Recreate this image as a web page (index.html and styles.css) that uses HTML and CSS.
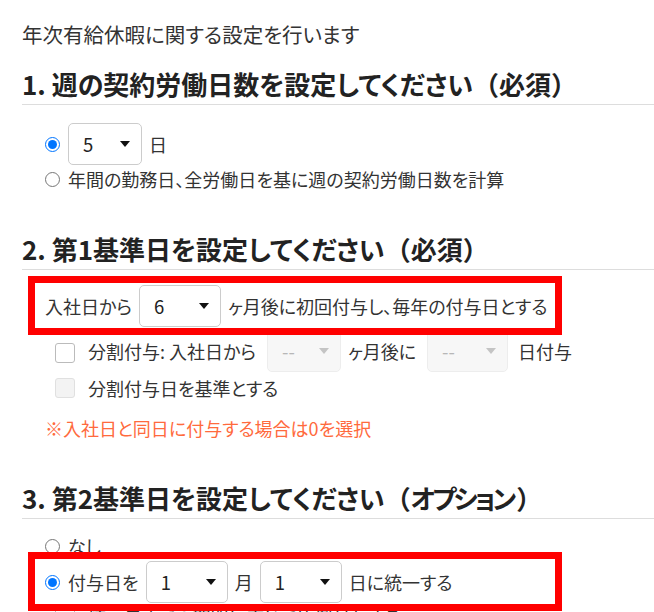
FILE: index.html
```html
<!DOCTYPE html>
<html lang="ja">
<head>
<meta charset="utf-8">
<title>年次有給休暇設定</title>
<link rel="stylesheet" href="styles.css">
</head>
<body>
<main class="page">
  <p class="intro">年次有給休暇に関する設定を行います</p>

  <section class="section">
    <h2 class="section-title">1. 週の契約労働日数を設定してください<span class="paren">（</span>必須<span class="paren">）</span></h2>
    <div class="options first-options">
      <label class="row">
        <input class="radio" type="radio" name="week" checked>
        <span class="select w74"><select><option>5</option></select></span>
        <span>日</span>
      </label>
      <label class="row line">
        <input class="radio" type="radio" name="week">
        <span>年間の勤務日、全労働日を基に週の契約労働日数を計算</span>
      </label>
    </div>
  </section>

  <section class="section">
    <h2 class="section-title">2. 第1基準日を設定してください<span class="paren">（</span>必須<span class="paren">）</span></h2>
    <div class="options second-options">
      <div class="row marked">
        <span>入社日から</span>
        <span class="select w82"><select><option>6</option></select></span>
        <span>ヶ月後に初回付与し、毎年の付与日とする</span>
        <span class="highlight"></span>
      </div>
      <label class="row check-row split">
        <input class="check" type="checkbox">
        <span class="check-label">分割付与: 入社日から</span>
        <span class="select w74 disabled"><select disabled><option>--</option></select></span>
        <span>ヶ月後に</span>
        <span class="select w81 disabled"><select disabled><option>--</option></select></span>
        <span class="tail">日付与</span>
      </label>
      <label class="row check-row line base">
        <input class="check" type="checkbox" disabled>
        <span class="check-label">分割付与日を基準とする</span>
      </label>
      <p class="note">※入社日と同日に付与する場合は0を選択</p>
    </div>
  </section>

  <section class="section">
    <h2 class="section-title">3. 第2基準日を設定してください<span class="paren">（</span><span class="kata">オプション</span><span class="paren">）</span></h2>
    <div class="options third-options">
      <label class="row line">
        <input class="radio" type="radio" name="second">
        <span>なし</span>
      </label>
      <div class="row marked unify">
        <input class="radio" type="radio" name="second" checked>
        <span>付与日を</span>
        <span class="select w82"><select><option>1</option></select></span>
        <span>月</span>
        <span class="select w82"><select><option>1</option></select></span>
        <span>日に統一する</span>
        <span class="highlight"></span>
      </div>
      <label class="row check-row line after">
        <input class="check" type="checkbox">
        <span class="check-label">統一日までの期間に応じて比例付与する</span>
      </label>
    </div>
  </section>
</main>
</body>
</html>
```

FILE: styles.css
```css
* {
  box-sizing: border-box;
}

html {
  overflow: hidden;
}

body {
  margin: 0;
  background: #ffffff;
  color: #333333;
  font-family: "Noto Sans CJK JP", "Noto Sans", sans-serif;
  font-size: 18px;
  line-height: 28px;
  font-feature-settings: "palt" 1;
}

.page {
  padding: 20px 0 0 22px;
}

.intro {
  margin: 0;
  font-size: 20.5px;
  line-height: 28px;
}

.section-title {
  margin: 42px 0 0;
  padding-bottom: 7px;
  border-bottom: 1px solid #dddddd;
  color: #222222;
  font-size: 26px;
  line-height: 27px;
  font-weight: 700;
}

.paren {
  font-feature-settings: normal;
}

.kata {
  letter-spacing: -3px;
  margin-right: 3px;
}

.section:first-of-type .section-title {
  margin-top: 22px;
}

.options {
  padding-left: 23px;
}

.first-options {
  margin-top: 18px;
}

.second-options {
  margin-top: 15px;
}

.third-options {
  margin-top: 13px;
}

.row {
  display: flex;
  align-items: center;
  gap: 7px;
  height: 42px;
  white-space: nowrap;
}

.row.line {
  height: 28px;
}

.marked {
  position: relative;
}

.highlight {
  position: absolute;
  z-index: 2;
  left: -17px;
  top: -9px;
  width: 534px;
  height: 59px;
  border: 7px solid #ff0000;
  pointer-events: none;
}

.radio {
  width: 15px;
  height: 15px;
  margin: 0 1px 0 0;
  accent-color: #0075ff;
}

.select {
  position: relative;
  display: inline-block;
  flex: none;
  height: 42px;
}

.select select {
  appearance: none;
  -webkit-appearance: none;
  width: 100%;
  height: 42px;
  margin: 0;
  padding: 0 0 0 14px;
  border: 1px solid #cccccc;
  border-radius: 5px;
  background: #ffffff;
  color: #222222;
  font-family: inherit;
  font-size: 18.5px;
}

.select::after {
  content: "";
  position: absolute;
  right: 12px;
  top: 50%;
  margin-top: -3px;
  border-left: 5px solid transparent;
  border-right: 5px solid transparent;
  border-top: 6px solid #111111;
  pointer-events: none;
}

.select.disabled select {
  background: #f5f5f5;
  border-color: #e6e6e6;
  color: #999999;
}

.select.disabled::after {
  border-top-color: #c4c4c4;
}

.w74 {
  width: 74px;
}

.w81 {
  width: 81px;
}

.w82 {
  width: 82px;
}

.second-options .marked {
  margin-bottom: 3px;
}

.check-row {
  padding-left: 10px;
}

.check {
  appearance: none;
  -webkit-appearance: none;
  flex: none;
  width: 20px;
  height: 20px;
  margin: 0 6px 0 0;
  border: 1px solid #bbbbbb;
  border-radius: 3px;
  background: #ffffff;
}

.check:disabled {
  background: #f3f3f3;
  border-color: #e0e0e0;
}

.split .check {
  margin-top: 4px;
}

.split .select {
  margin-left: 4px;
}

.tail {
  margin-left: 3px;
}

.base {
  margin-top: 2px;
}

.note {
  margin: 12px 0 0;
  color: #ff6a3d;
  line-height: 28px;
}

.unify {
  margin-top: 1px;
}

.after {
  margin-top: 0;
}
```
